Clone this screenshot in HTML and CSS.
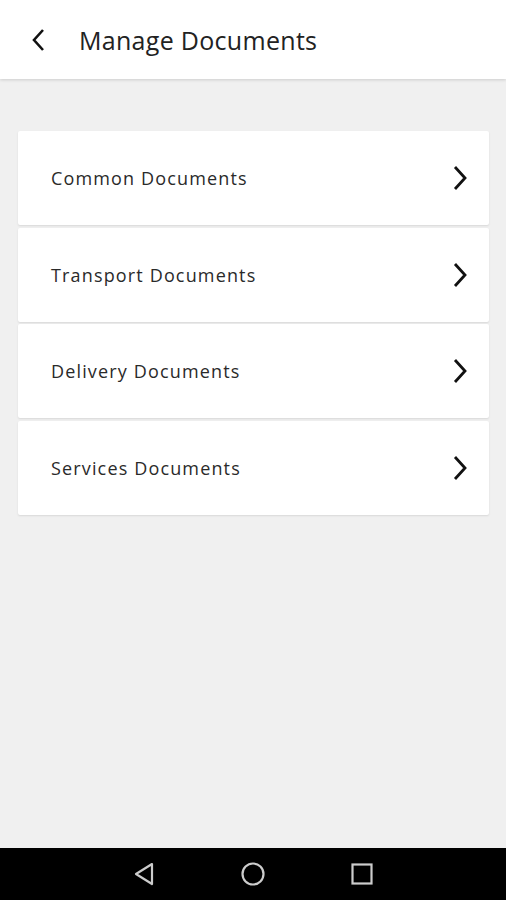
FILE: index.html
```html
<!DOCTYPE html>
<html lang="en">
<head>
  <meta charset="UTF-8" />
  <title>Manage Documents</title>
  <link rel="stylesheet" href="styles.css">
</head>
<body>
  <div class="screen">
    <header class="topbar">
      <a class="back" href="#">
        <svg width="16" height="24" viewBox="0 0 16 24"><path d="M13 2 L4 12 L13 22" fill="none" stroke="#111" stroke-width="2.6"/></svg>
      </a>
      <h1>Manage Documents</h1>
    </header>

    <main class="content">
      <ul class="doc-list">
        <li class="doc-item"><span>Common Documents</span><svg class="chev" width="16" height="26" viewBox="0 0 16 26"><path d="M3 2 L13 13 L3 24" fill="none" stroke="#111" stroke-width="2.8"/></svg></li>
        <li class="doc-item"><span>Transport Documents</span><svg class="chev" width="16" height="26" viewBox="0 0 16 26"><path d="M3 2 L13 13 L3 24" fill="none" stroke="#111" stroke-width="2.8"/></svg></li>
        <li class="doc-item"><span>Delivery Documents</span><svg class="chev" width="16" height="26" viewBox="0 0 16 26"><path d="M3 2 L13 13 L3 24" fill="none" stroke="#111" stroke-width="2.8"/></svg></li>
        <li class="doc-item"><span>Services Documents</span><svg class="chev" width="16" height="26" viewBox="0 0 16 26"><path d="M3 2 L13 13 L3 24" fill="none" stroke="#111" stroke-width="2.8"/></svg></li>
      </ul>
    </main>

    <nav class="navbar">
      <svg width="24" height="26" viewBox="0 0 24 26"><path d="M20 3 L4 13 L20 23 Z" fill="none" stroke="#ccc" stroke-width="2.2" stroke-linejoin="round"/></svg>
      <svg width="26" height="26" viewBox="0 0 26 26"><circle cx="13" cy="13" r="10.5" fill="none" stroke="#ccc" stroke-width="2.2"/></svg>
      <svg width="24" height="24" viewBox="0 0 24 24"><rect x="2.5" y="2.5" width="19" height="19" fill="none" stroke="#ccc" stroke-width="2.2"/></svg>
    </nav>
  </div>
</body>
</html>
```

FILE: styles.css
```css
* {
  margin: 0; padding: 0; box-sizing: border-box;
  font-family: 'Open Sans', sans-serif;
}

body {
  width: 506px;
  height: 900px;
  background: #f0f0f0;
}

.screen {
  height: 900px;
  display: flex;
  flex-direction: column;
}

.topbar {
  height: 79px;
  background: #fff;
  display: flex;
  align-items: center;
  box-shadow: 0 1px 3px rgba(0, 0, 0, 0.15);
  position: relative;
  z-index: 1;
}

.back {
  display: flex;
  margin-left: 30px;
  margin-right: 33px;
}

.topbar h1 {
  font-size: 25px;
  font-weight: 400;
  color: #222;
  letter-spacing: 0.3px;
}

.content {
  flex: 1;
  padding: 52px 17px 0 18px;
}

.doc-list {
  list-style: none;
  display: flex;
  flex-direction: column;
  gap: 2.5px;
}

.doc-item {
  height: 94px;
  background: #fff;
  border-radius: 2px;
  box-shadow: 0 1px 2px rgba(0, 0, 0, 0.1);
  display: flex;
  align-items: center;
  justify-content: space-between;
  padding: 0 21px 0 33px;
  font-size: 18px;
  letter-spacing: 1.15px;
  color: #2a2a2a;
}

.navbar {
  height: 52px;
  background: #000;
  display: flex;
  align-items: center;
  justify-content: center;
  gap: 84px;
}
```
